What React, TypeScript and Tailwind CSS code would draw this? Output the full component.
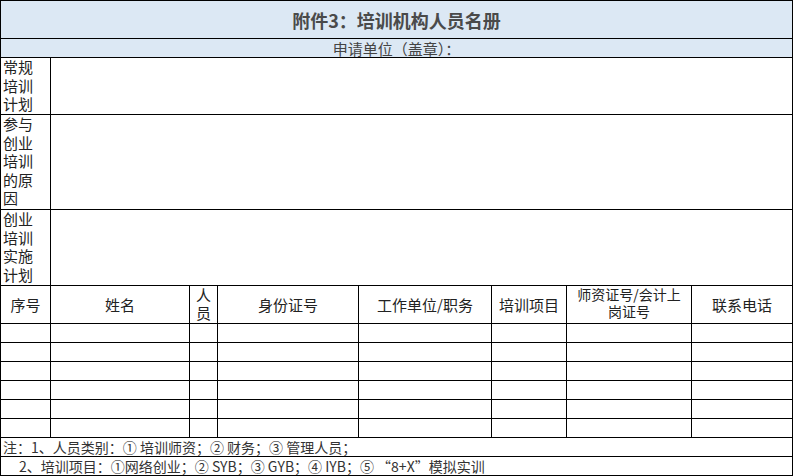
import React from "react";

const cols = [50, 139, 28, 141, 133, 75, 125, 101];
const font = { fontFamily: '"Noto Sans CJK SC", "Liberation Sans", sans-serif' };

export default function App() {
  const b = "border border-black p-0";
  const rows = [0, 1, 2, 3, 4, 5];
  return (
    <div className="w-[793px] h-[476px] bg-white overflow-hidden text-[14px] leading-[16px] text-black" style={font}>
      <table className="border-collapse table-fixed w-[793px]">
        <colgroup>
          {cols.map((w, i) => (
            <col key={i} style={{ width: w }} />
          ))}
        </colgroup>
        <tbody>
          <tr className="h-[38px] bg-[#dce8f4]">
            <td colSpan={8} className={`${b} text-center font-bold text-[18px] text-[#4a4a4a]`}>附件3：培训机构人员名册</td>
          </tr>
          <tr className="h-[19px] bg-[#dce8f4]">
            <td colSpan={8} className={`${b} text-center text-[15px] text-[#444]`}><div className="h-[17px] leading-[17px] overflow-hidden">申请单位（盖章）：</div></td>
          </tr>
          {[
            ["常规培训计划", 57],
            ["参与创业培训的原因", 95],
            ["创业培训实施计划", 76],
          ].map(([t, h]) => (
            <tr key={t as string} style={{ height: h as number }}>
              <td className={`${b} align-top px-[2px] text-[15px] leading-[18.5px] text-[#222]`}>
                <div className="w-[32px] break-all overflow-hidden" style={{ maxHeight: (h as number) - 1 }}>{t}</div>
              </td>
              <td colSpan={7} className={b}></td>
            </tr>
          ))}
          <tr className="h-[38px] text-center text-[15px] text-[#222]">
            <td className={b}>序号</td>
            <td className={b}>姓名</td>
            <td className={b}><div className="h-[37px] leading-[18px] overflow-hidden">人<br />员</div></td>
            <td className={b}>身份证号</td>
            <td className={b}>工作单位/职务</td>
            <td className={b}>培训项目</td>
            <td className={`${b} text-[14px]`}><div className="h-[37px] leading-[17px] overflow-hidden">师资证号/会计上<br />岗证号</div></td>
            <td className={b}>联系电话</td>
          </tr>
          {rows.map((r) => (
            <tr key={r} className="h-[19px]">
              {cols.map((_, i) => (
                <td key={i} className={b}></td>
              ))}
            </tr>
          ))}
          <tr className="h-[19px]">
            <td colSpan={8} className={`${b} px-[2px] text-[#333]`}><div className="h-[18px] leading-[18px] overflow-hidden">注：1、人员类别：① 培训师资；② 财务；③ 管理人员；</div></td>
          </tr>
          <tr className="h-[19px]">
            <td colSpan={8} className={`${b} pl-[18px] text-[#333]`}><div className="h-[18px] leading-[18px] overflow-hidden">2、培训项目：①网络创业；② SYB；③ GYB；④ IYB；⑤ “8+X”模拟实训</div></td>
          </tr>
        </tbody>
      </table>
    </div>
  );
}
